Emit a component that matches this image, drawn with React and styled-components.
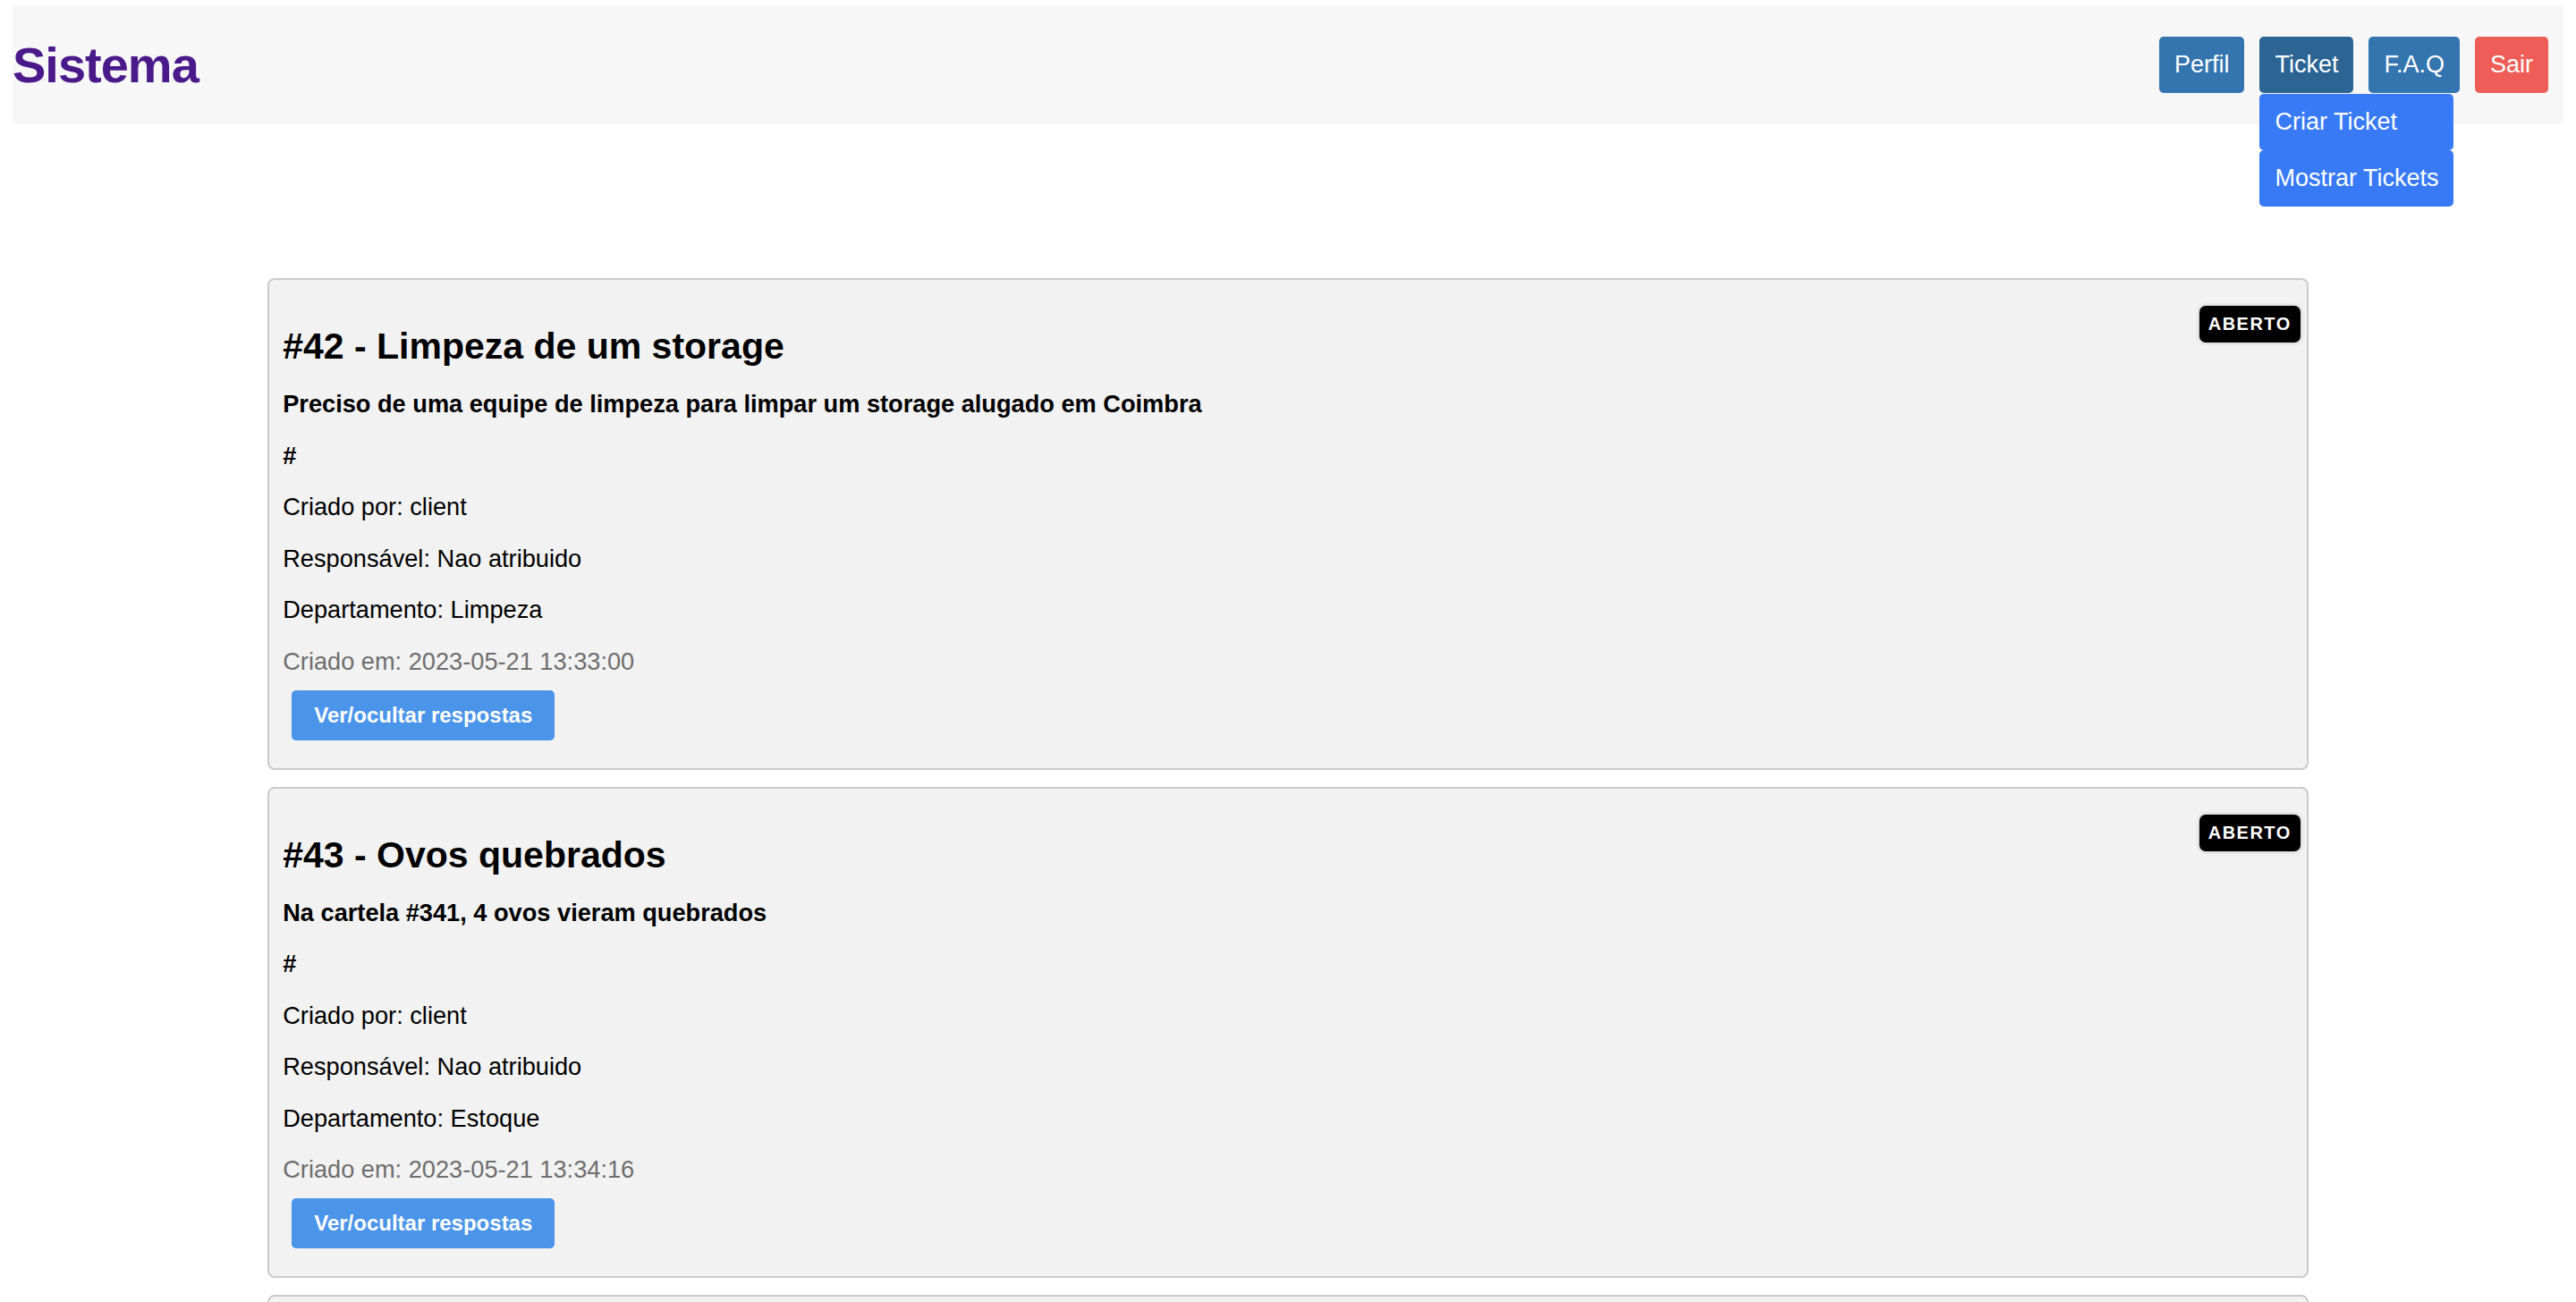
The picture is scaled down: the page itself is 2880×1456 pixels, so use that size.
import React from "react";
import styled, { createGlobalStyle } from "styled-components";

const GlobalStyle = createGlobalStyle`
  body {
    margin: 6px 14px;
    background: #fff;
    font-family: "Liberation Sans", Arial, Helvetica, sans-serif;
    color: #000;
  }
`;

const tickets = [
  {
    id: 42,
    title: "Limpeza de um storage",
    description:
      "Preciso de uma equipe de limpeza para limpar um storage alugado em Coimbra",
    author: "client",
    owner: "Nao atribuido",
    department: "Limpeza",
    created: "2023-05-21 13:33:00",
  },
  {
    id: 43,
    title: "Ovos quebrados",
    description: "Na cartela #341, 4 ovos vieram quebrados",
    author: "client",
    owner: "Nao atribuido",
    department: "Estoque",
    created: "2023-05-21 13:34:16",
  },
  {
    id: 44,
    title: "Pedido atrasado",
    description: "O pedido ainda nao chegou",
    author: "client",
    owner: "Nao atribuido",
    department: "Estoque",
    created: "2023-05-21 13:35:02",
  },
];

const navColors = {
  default: "#3475b0",
  active: "#2c6493",
  danger: "#ee5d57",
};

const App = () => {
  return (
    <>
      <GlobalStyle />
      <Header>
        <Brand>Sistema</Brand>
        <Nav>
          <NavButton>Perfil</NavButton>
          <NavItem>
            <NavButton $variant="active">Ticket</NavButton>
            <Dropdown>
              <DropdownLink>Criar Ticket</DropdownLink>
              <DropdownLink>Mostrar Tickets</DropdownLink>
            </Dropdown>
          </NavItem>
          <NavButton>F.A.Q</NavButton>
          <NavButton $variant="danger">Sair</NavButton>
        </Nav>
      </Header>

      <List>
        {tickets.map((t) => (
          <Card key={t.id}>
            <Badge>ABERTO</Badge>
            <Title>
              #{t.id} - {t.title}
            </Title>
            <Row $bold>{t.description}</Row>
            <Row $bold>#</Row>
            <Row>Criado por: {t.author}</Row>
            <Row>Responsável: {t.owner}</Row>
            <Row>Departamento: {t.department}</Row>
            <Row $muted>Criado em: {t.created}</Row>
            <ToggleButton>Ver/ocultar respostas</ToggleButton>
          </Card>
        ))}
      </List>
    </>
  );
};

const Header = styled.header`
  display: flex;
  justify-content: space-between;
  align-items: center;
  height: 133px;
  padding: 0 17px 0 0;
  background-color: #f7f7f7;
`;

const Brand = styled.h1`
  margin: 0;
  font-size: 56px;
  font-weight: 700;
  letter-spacing: -1px;
  color: #4b1a8a;
`;

const Nav = styled.nav`
  display: flex;
  align-items: center;
  gap: 17px;
`;

const NavItem = styled.div`
  position: relative;
`;

const NavButton = styled.a`
  display: block;
  padding: 16px 17px;
  border-radius: 5px;
  font-size: 27px;
  line-height: 31px;
  color: #fff;
  text-decoration: none;
  background-color: ${({ $variant }) => navColors[$variant] || navColors.default};
  cursor: pointer;
`;

const Dropdown = styled.div`
  position: absolute;
  top: calc(100% + 1px);
  left: 0;
  display: flex;
  flex-direction: column;
  width: max-content;
  z-index: 10;
`;

const DropdownLink = styled.a`
  display: block;
  padding: 16px 17px;
  border-radius: 5px;
  font-size: 27px;
  line-height: 31px;
  color: #fff;
  background-color: #387af6;
  cursor: pointer;
`;

const List = styled.main`
  width: 80%;
  margin: 172px auto 0;
`;

const Card = styled.article`
  position: relative;
  margin-bottom: 19px;
  padding: 51px 15px 31px;
  border: 2px solid #cbcbcb;
  border-radius: 8px;
  background-color: #f2f2f2;
`;

const Badge = styled.span`
  position: absolute;
  top: 29px;
  right: 7px;
  height: 41px;
  padding: 0 10px;
  display: flex;
  align-items: center;
  border-radius: 7px;
  background-color: #000;
  color: #fff;
  font-size: 20px;
  font-weight: 700;
  letter-spacing: 1.5px;
  box-shadow: 0 0 4px rgba(0, 0, 0, 0.25);
`;

const Title = styled.h2`
  margin: 0 0 26px;
  font-size: 41px;
  line-height: 46px;
  font-weight: 700;
`;

const Row = styled.p`
  margin: 0 0 26.5px;
  font-size: 27.2px;
  line-height: 31px;
  font-weight: ${({ $bold }) => ($bold ? 700 : 400)};
  color: ${({ $muted }) => ($muted ? "#6e6e6e" : "#000")};

  &:last-of-type {
    margin-bottom: 17px;
  }
`;

const ToggleButton = styled.button`
  display: block;
  height: 56px;
  margin-left: 10px;
  padding: 0 25px;
  border: none;
  border-radius: 5px;
  background-color: #4a94ea;
  color: #fff;
  font-family: inherit;
  font-size: 24px;
  font-weight: 700;
  cursor: pointer;
`;

export default App;
